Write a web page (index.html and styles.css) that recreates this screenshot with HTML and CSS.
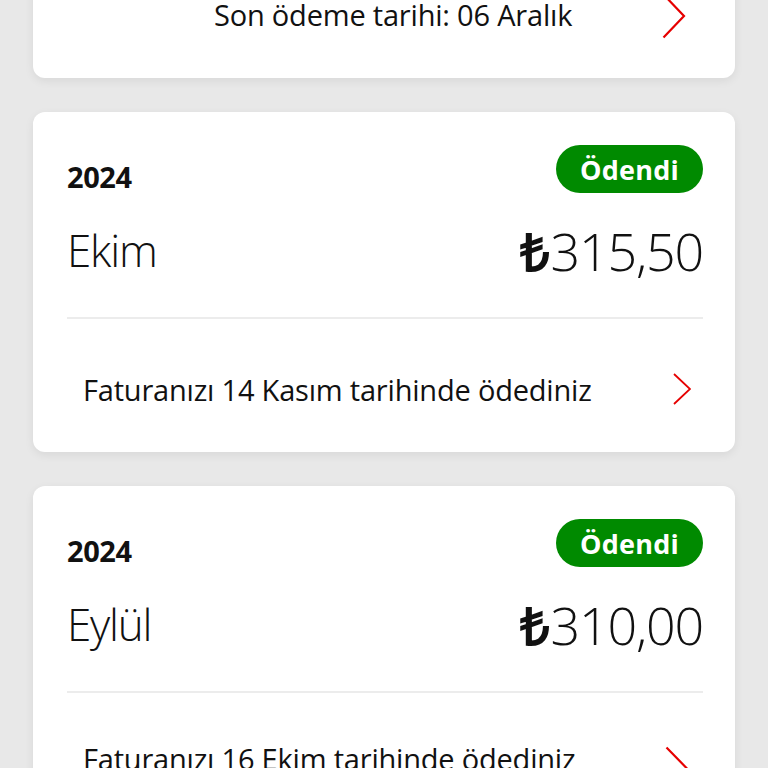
FILE: index.html
```html
<!DOCTYPE html>
<html lang="tr">
<head>
<meta charset="utf-8">
<link rel="stylesheet" href="styles.css">
</head>
<body>
<main class="list">
  <section class="card card-top">
    <div class="foot foot-top">
      <span class="foot-text due">Son ödeme tarihi: 06 Aralık</span>
      <svg class="chev chev-lg" viewBox="0 0 24 46" width="24" height="46"><path d="M1.5 1.5 L22 23 L1.5 44.5" fill="none" stroke="#e60000" stroke-width="2.2"/></svg>
    </div>
  </section>

  <section class="card">
    <div class="head">
      <span class="year">2024</span>
      <span class="badge">Ödendi</span>
    </div>
    <div class="main">
      <span class="month">Ekim</span>
      <span class="amount"><span class="lira">₺</span>315,50</span>
    </div>
    <div class="sep"></div>
    <div class="foot">
      <span class="foot-text">Faturanızı 14 Kasım tarihinde ödediniz</span>
      <svg class="chev" viewBox="0 0 18 32" width="18" height="32"><path d="M1 1 L17 16 L1 31" fill="none" stroke="#e60000" stroke-width="1.8"/></svg>
    </div>
  </section>

  <section class="card">
    <div class="head">
      <span class="year">2024</span>
      <span class="badge">Ödendi</span>
    </div>
    <div class="main">
      <span class="month">Eylül</span>
      <span class="amount"><span class="lira">₺</span>310,00</span>
    </div>
    <div class="sep"></div>
    <div class="foot foot-last">
      <span class="foot-text">Faturanızı 16 Ekim tarihinde ödediniz</span>
      <svg class="chev chev-lg2" viewBox="0 0 23 44" width="23" height="44"><path d="M1.5 1.5 L21.5 22 L1.5 42.5" fill="none" stroke="#e60000" stroke-width="2.2"/></svg>
    </div>
  </section>
</main>
</body>
</html>
```

FILE: styles.css
```css
* { box-sizing: border-box; }
html, body { margin: 0; padding: 0; }
body {
  background: #e8e8e8;
  font-family: "Open Sans", "Liberation Sans", sans-serif;
  color: #111;
  width: 768px;
  height: 768px;
  overflow: hidden;
}
.list {
  display: flex;
  flex-direction: column;
  gap: 34px;
  padding: 0 33px;
}
.card {
  background: #fff;
  border-radius: 12px;
  padding: 33px 32px 0 34px;
  box-shadow: 0 3px 10px rgba(0, 0, 0, 0.07);
}
.card-top {
  margin-top: -100px;
  padding-top: 91px;
}
.head {
  display: flex;
  justify-content: space-between;
  align-items: center;
  height: 48px;
}
.year {
  font-weight: 700;
  font-size: 29px;
  letter-spacing: -0.4px;
  margin-top: 14px;
}
.badge {
  background: #008a00;
  color: #fff;
  font-weight: 700;
  font-size: 27px;
  height: 48px;
  width: 147px;
  border-radius: 24px;
  display: flex;
  align-items: center;
  justify-content: center;
  letter-spacing: 0.2px;
}
.main {
  display: flex;
  justify-content: space-between;
  align-items: center;
  height: 50px;
  margin-top: 32px;
}
.month {
  font-weight: 300;
  font-size: 44px;
  letter-spacing: -1.2px;
}
.amount {
  font-weight: 300;
  font-size: 52px;
  letter-spacing: -1.2px;
}
.lira {
  font-weight: 600;
  margin-right: 2px;
}
.sep {
  height: 2px;
  background: #ececec;
  margin-top: 42px;
}
.foot {
  display: flex;
  justify-content: space-between;
  align-items: center;
  height: 50px;
  margin: 45px 0 38px;
  padding: 0 12px 0 16px;
}
.foot-top {
  margin-top: 0;
  margin-bottom: 37px;
  padding-left: 147px;
  padding-right: 17px;
}
.foot-last {
  margin-top: 40px;
}
.foot-text {
  font-size: 29px;
  letter-spacing: -0.2px;
}
.due { margin-top: -4px; }
.chev { display: block; flex: none; }
.chev-lg2 { margin-right: 3px; margin-top: 20px; }
```
